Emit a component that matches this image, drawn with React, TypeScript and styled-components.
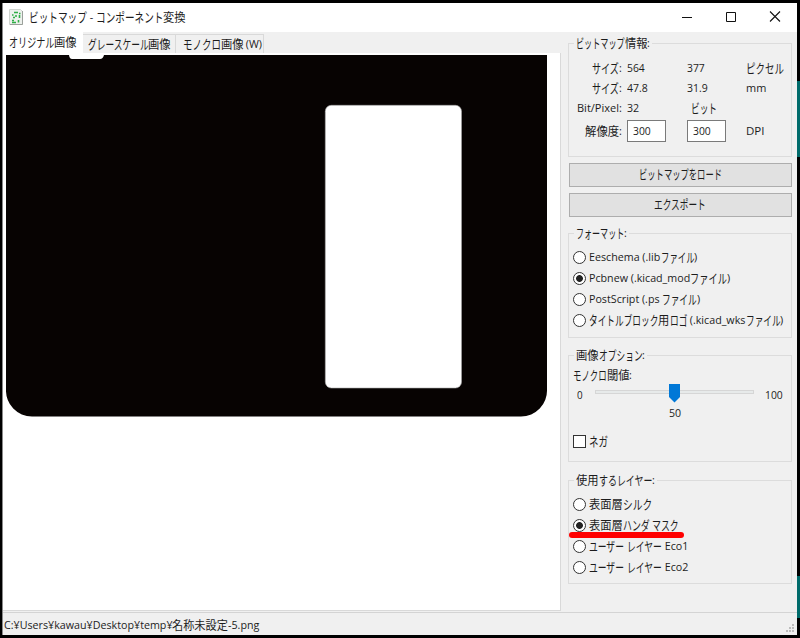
import React, { useLayoutEffect, useRef, useState } from "react";
import styled, { createGlobalStyle } from "styled-components";

const Global = createGlobalStyle`
  * { box-sizing: border-box; }
  body { margin: 0; background: #000; font-family: "Open Sans", "Noto Sans CJK JP", sans-serif; font-size: 12px; color: #1c1c1c; }
`;

/* ---------- condensed UI text ---------- */

type Script = "latin" | "kana" | "kanji";

const families: Record<Script, string> = {
  latin: '"Open Sans", sans-serif',
  kana: '"Noto Sans CJK JP", sans-serif',
  kanji: '"Noto Sans CJK JP", sans-serif',
};
const sizes: Record<Script, number> = { latin: 11.5, kana: 13, kanji: 12 };
const ratios: Record<Script, number> = { latin: 0.93, kana: 1, kanji: 0.94 };

const Line = styled.span<{ $w: number }>`
  display: flex;
  align-items: center;
  flex: none;
  width: ${(p) => p.$w}px;
  height: 16px;
  line-height: 16px;
  white-space: pre;
`;
const Run = styled.span`
  display: block;
  flex: none;
  height: 16px;
`;
const Glyphs = styled.span<{ $script: Script }>`
  display: inline-block;
  height: 16px;
  line-height: 16px;
  vertical-align: top;
  transform-origin: 0 50%;
  font-family: ${(p) => families[p.$script]};
  font-size: ${(p) => sizes[p.$script]}px;
`;

const scriptOf = (s: string): Script =>
  /^[\u3040-\u30ff]/.test(s) ? "kana" : /^[\u0000-\u00ff]/.test(s) ? "latin" : "kanji";

/* Fits a string to a width: kana absorb the difference, other scripts keep their shape. */
function Text({ children, w }: { children: string; w: number }) {
  const runs = children.match(/[\u3040-\u30ff]+|[\u0000-\u00ff]+|[^\u0000-\u00ff\u3040-\u30ff]+/g) || [];
  const refs = useRef<(HTMLSpanElement | null)[]>([]);
  const [fit, setFit] = useState<{ width: number; scale: number }[]>([]);
  useLayoutEffect(() => {
    const natural = runs.map((_, i) => refs.current[i]!.offsetWidth);
    const kinds = runs.map(scriptOf);
    let scales: number[];
    if (kinds.includes("kana")) {
      let fixed = 0;
      let kana = 0;
      kinds.forEach((k, i) => {
        if (k === "kana") kana += natural[i];
        else fixed += natural[i] * ratios[k];
      });
      scales = kinds.map((k) => (k === "kana" ? (w - fixed) / kana : ratios[k]));
    } else {
      const total = natural.reduce((a, b) => a + b, 0);
      scales = runs.map(() => w / total);
    }
    setFit(scales.map((scale, i) => ({ scale, width: natural[i] * scale })));
  }, [children, w]);
  return (
    <Line $w={w}>
      {runs.map((r, i) => (
        <Run key={i} style={fit[i] && { width: fit[i].width }}>
          <Glyphs
            $script={scriptOf(r)}
            ref={(el) => { refs.current[i] = el; }}
            style={fit[i] && { transform: `scaleX(${fit[i].scale})` }}
          >
            {r}
          </Glyphs>
        </Run>
      ))}
    </Line>
  );
}

/* ---------- window frame ---------- */

const Desktop = styled.div`
  display: grid;
  grid-template-columns: 795px 3px;
  width: 800px;
  height: 638px;
  padding: 3px 0 0 2px;
  background: #000;
  overflow: hidden;
`;
const Edge = styled.div`
  height: 635px;
  background: linear-gradient(#000 78px, #006b6b 78px 154px, #000 154px 573px, #006b6b 573px 615px, #000 615px);
`;
const Window = styled.div`
  display: flex;
  flex-direction: column;
  height: 632px;
  background: #f0f0f0;
  border-left: 1px solid #8a8a8a;
`;
const TitleBar = styled.header`
  display: flex;
  align-items: center;
  height: 29px;
  flex: none;
  padding: 0 16px 2px 6px;
  background: #fff;
`;
const AppIcon = styled.svg`
  width: 15px;
  height: 16px;
  margin-right: 5px;
`;
const Caption = styled.div`
  display: flex;
  align-items: center;
  gap: 32px;
  margin-left: auto;
  svg { width: 12px; height: 11px; display: block; }
`;
const Body = styled.main`
  display: flex;
  height: 580px;
  flex: none;
`;
const StatusBar = styled.footer`
  display: flex;
  justify-content: space-between;
  align-items: center;
  height: 23px;
  border-top: 1px solid #d4d4d4;
  padding: 2px 2px 0 1px;
`;
const Grip = styled.svg`
  width: 9px;
  height: 9px;
  align-self: flex-end;
  margin-bottom: 2px;
`;

/* ---------- notebook ---------- */

const Notebook = styled.section`
  width: 558px;
  height: 580px;
`;
const Tabs = styled.nav`
  display: flex;
  align-items: flex-end;
  height: 21px;
`;
const Tab = styled.div<{ $w: number; $active?: boolean; $inset: number }>`
  display: flex;
  align-items: center;
  width: ${(p) => p.$w}px;
  height: ${(p) => (p.$active ? 21 : 19)}px;
  padding: 0 0 ${(p) => (p.$active ? 3 : 1)}px ${(p) => p.$inset}px;
  background: ${(p) => (p.$active ? "#fff" : "#f0f0f0")};
  border: 1px solid ${(p) => (p.$active ? "#fff" : "#d9d9d9")};
  border-left: 0;
  border-bottom: 0;
`;
const Page = styled.div`
  height: 558px;
  padding: 2px 0 0 3px;
  background: #fff;
  border-right: 1px solid #d9d9d9;
  border-bottom: 1px solid #d9d9d9;
`;
const Bitmap = styled.svg`
  display: block;
  width: 542px;
  height: 362px;
`;

/* ---------- side panel ---------- */

const Panel = styled.aside`
  width: 232px;
  padding: 11px 0 0 7px;
`;
const Group = styled.section<{ $h: number; $gap: number }>`
  width: 224px;
  height: ${(p) => p.$h}px;
  margin-bottom: ${(p) => p.$gap}px;
  border: 1px solid #dcdcdc;
`;
const Legend = styled.div`
  display: flex;
  width: fit-content;
  height: 16px;
  margin: -9px 0 1px 5px;
  padding: 0 2px;
  background: #f0f0f0;
`;
const InfoGrid = styled.div`
  display: grid;
  grid-template-columns: 53px 60px 59px auto;
  grid-template-rows: 20px 20px 20px 26px;
  align-items: center;
  padding-top: 6px;
`;
const Cell = styled.div`
  display: flex;
  justify-content: flex-end;
`;
const Value = styled.div<{ $inset?: number }>`
  display: flex;
  padding-left: ${(p) => p.$inset ?? 5}px;
`;
const Field = styled.div`
  display: flex;
  align-items: center;
  width: 39px;
  height: 22px;
  padding-left: 5px;
  background: #fff;
  border: 1px solid #7a7a7a;
`;
const Button = styled.button`
  display: flex;
  align-items: center;
  justify-content: center;
  width: 223px;
  height: 24px;
  margin: 0 0 6px 1px;
  padding: 0 1px 2px 0;
  background: #e1e1e1;
  border: 1px solid #adadad;
  color: inherit;
`;
const Spacer = styled.div`
  height: 10px;
`;
const Options = styled.div`
  display: flex;
  flex-direction: column;
  padding: 5px 0 0 4px;
`;
const Option = styled.label`
  position: relative;
  display: flex;
  align-items: center;
  gap: 3px;
  height: 21.1px;
`;
const Radio = styled.span<{ $on?: boolean }>`
  width: 13px;
  height: 13px;
  flex: none;
  border: 1px solid #333;
  border-radius: 50%;
  background: ${(p) => (p.$on ? "radial-gradient(circle, #222 3px, #fff 3.8px)" : "#fff")};
`;
const OptionText = styled.span`
  display: flex;
  margin-top: -1px;
`;
const Underline = styled.span`
  position: absolute;
  left: -4px;
  top: 17px;
  width: 115px;
  height: 6px;
  border-radius: 3px;
  background: #f00;
`;
const ThresholdTitle = styled.div`
  display: flex;
  padding: 3px 0 0 4px;
`;
const SliderRow = styled.div`
  display: flex;
  justify-content: space-between;
  align-items: flex-start;
  height: 22px;
  margin-top: 1px;
  padding: 0 8px;
`;
const Scale = styled.div`
  padding-top: 3px;
`;
const Track = styled.div`
  display: flex;
  justify-content: center;
  width: 159px;
  height: 4px;
  margin: 6px 3px 0 3px;
  background: #e7eaea;
  border: 1px solid #d6d6d6;
`;
const Thumb = styled.svg`
  flex: none;
  width: 11px;
  height: 19px;
  margin-top: -7px;
`;
const Current = styled.div`
  display: flex;
  padding-left: 100px;
  margin-top: -1px;
`;
const CheckRow = styled.label`
  display: flex;
  align-items: center;
  gap: 3px;
  margin: 12px 0 0 4px;
`;
const Box = styled.span`
  width: 13px;
  height: 13px;
  background: #fff;
  border: 1px solid #333;
`;

function RadioList({ items }: { items: { label: string; w: number; on?: boolean; marked?: boolean }[] }) {
  return (
    <Options>
      {items.map((o) => (
        <Option key={o.label}>
          <Radio $on={o.on} />
          <OptionText><Text w={o.w}>{o.label}</Text></OptionText>
          {o.marked && <Underline />}
        </Option>
      ))}
    </Options>
  );
}

export default function App() {
  return (
    <>
      <Global />
      <Desktop>
        <Window>
          <TitleBar>
            <AppIcon viewBox="0 0 15 16">
              <path d="M.5 .5h11l2 2v13H.5z" fill="#edf1ed" stroke="#cfd4cf" />
              <path d="M13.500 2v13.500H1" fill="none" stroke="#9ba09b" />
              <path d="M5 3.500h4M10 4.500h1.500M3 6h1.500M6 7h2M10.500 6v3M4 8.500h2M3 11.500h2M9.500 11v2.500M3 13.500h4" fill="none" stroke="#2fae46" strokeWidth="1.600" />
            </AppIcon>
            <Text w={157}>ビットマップ - コンポーネント変換</Text>
            <Caption>
              <svg viewBox="0 0 12 11"><path d="M1 6.500h10" stroke="#111" /></svg>
              <svg viewBox="0 0 12 11"><path d="M1.500 1.500h9v9h-9z" fill="none" stroke="#111" /></svg>
              <svg viewBox="0 0 12 11"><path d="M1 .5l10 10M11 .5l-10 10" stroke="#111" strokeWidth="1.100" /></svg>
            </Caption>
          </TitleBar>
          <Body>
            <Notebook>
              <Tabs>
                <Tab $w={80} $active $inset={6}><Text w={68}>オリジナル画像</Text></Tab>
                <Tab $w={93} $inset={5}><Text w={83}>グレースケール画像</Text></Tab>
                <Tab $w={88} $inset={7}><Text w={79}>モノクロ画像 (W)</Text></Tab>
              </Tabs>
              <Page>
                <Bitmap viewBox="0 0 542 362">
                  <path d="M0 0H541V334.500A26 26 0 0 1 515 361.500H26A26 26 0 0 1 0 334.500Z" fill="#070302" />
                  <path d="M63 0H98Q97 4 94 4H66Q63.500 4 63 0Z" fill="#fff" />
                  <rect x="319.300" y="50.300" width="136.200" height="282.700" rx="6" fill="#fff" stroke="#aaa" strokeWidth=".6" />
                </Bitmap>
              </Page>
            </Notebook>
            <Panel>
              <Group $h={114} $gap={6}>
                <Legend><Text w={74}>ビットマップ情報:</Text></Legend>
                <InfoGrid>
                  <Cell><Text w={30}>サイズ:</Text></Cell>
                  <Value><Text w={18}>564</Text></Value>
                  <Value><Text w={18}>377</Text></Value>
                  <Value><Text w={38}>ピクセル</Text></Value>
                  <Cell><Text w={30}>サイズ:</Text></Cell>
                  <Value><Text w={21}>47.8</Text></Value>
                  <Value><Text w={21}>31.9</Text></Value>
                  <Value><Text w={20}>mm</Text></Value>
                  <Cell><Text w={45}>Bit/Pixel:</Text></Cell>
                  <Value><Text w={12}>32</Text></Value>
                  <Value $inset={9}><Text w={26}>ビット</Text></Value>
                  <Value />
                  <Cell><Text w={37}>解像度:</Text></Cell>
                  <Value><Field><Text w={18}>300</Text></Field></Value>
                  <Value><Field><Text w={18}>300</Text></Field></Value>
                  <Value><Text w={18}>DPI</Text></Value>
                </InfoGrid>
              </Group>
              <Button><Text w={83}>ビットマップをロード</Text></Button>
              <Button><Text w={52}>エクスポート</Text></Button>
              <Spacer />
              <Group $h={105} $gap={17}>
                <Legend><Text w={51}>フォーマット:</Text></Legend>
                <RadioList
                  items={[
                    { label: "Eeschema (.libファイル)", w: 108 },
                    { label: "Pcbnew (.kicad_modファイル)", w: 141, on: true },
                    { label: "PostScript (.ps ファイル)", w: 111 },
                    { label: "タイトルブロック用ロゴ (.kicad_wksファイル)", w: 194 },
                  ]}
                />
              </Group>
              <Group $h={107} $gap={18}>
                <Legend><Text w={69}>画像オプション:</Text></Legend>
                <ThresholdTitle><Text w={59}>モノクロ閾値:</Text></ThresholdTitle>
                <SliderRow>
                  <Scale><Text w={6}>0</Text></Scale>
                  <Track>
                    <Thumb viewBox="0 0 11 19"><path d="M0 0h11v13l-5.500 5.500L0 13z" fill="#0078d7" /></Thumb>
                  </Track>
                  <Scale><Text w={18}>100</Text></Scale>
                </SliderRow>
                <Current><Text w={12}>50</Text></Current>
                <CheckRow><Box /><Text w={19}>ネガ</Text></CheckRow>
              </Group>
              <Group $h={104} $gap={0}>
                <Legend><Text w={79}>使用するレイヤー:</Text></Legend>
                <RadioList
                  items={[
                    { label: "表面層シルク", w: 63 },
                    { label: "表面層ハンダ マスク", w: 90, on: true, marked: true },
                    { label: "ユーザー レイヤー Eco1", w: 99 },
                    { label: "ユーザー レイヤー Eco2", w: 99 },
                  ]}
                />
              </Group>
            </Panel>
          </Body>
          <StatusBar>
            <Text w={256}>C:¥Users¥kawau¥Desktop¥temp¥名称未設定-5.png</Text>
            <Grip viewBox="0 0 9 9">
              <path d="M6 0h2v2H6zM6 3h2v2H6zM6 6h2v2H6zM3 3h2v2H3zM3 6h2v2H3zM0 6h2v2H0z" fill="#bcbcbc" />
            </Grip>
          </StatusBar>
        </Window>
        <Edge />
      </Desktop>
    </>
  );
}
